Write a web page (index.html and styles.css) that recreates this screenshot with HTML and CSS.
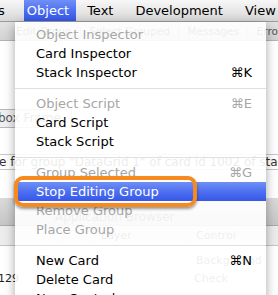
FILE: index.html
```html
<!DOCTYPE html>
<html lang="en">
<head>
  <meta charset="UTF-8" />
  <title>Object menu</title>
  <link rel="stylesheet" href="styles.css">
</head>
<body>

<!-- menu bar -->
<div class="menubar">
  <span class="mb-item mb-cut">s</span>
  <span class="mb-item mb-open">Object</span>
  <span class="mb-item">Text</span>
  <span class="mb-item">Development</span>
  <span class="mb-item">View</span>
</div>

<!-- windows behind the menu -->
<div class="backdrop">
  <div class="toolbar">
    <span>Edit Group</span><span class="bar">|</span><span>Select Grouped</span><span class="bar">|</span><span>Messages</span><span class="bar">|</span><span>Errors</span>
  </div>
  <div class="pane">
    <div class="field">kbox Frame</div>
    <div class="status">e for group "DataGrid 1" of card id 1002 of stack</div>
  </div>
  <div class="browser">
    <div class="browser-title">Application Browser</div>
    <div class="browser-head">
      <span class="col-a"></span><span class="col-b"></span><span class="col-c">Layer</span><span class="col-d">Control</span>
    </div>
    <div class="browser-body">
      <div class="browser-row"><span class="col-a"></span><span class="col-b"><i class="thumb"></i></span><span class="col-c"></span><span class="col-d">Background</span></div>
      <div class="browser-row"><span class="col-a num">129</span><span class="col-b"></span><span class="col-c"></span><span class="col-d">Check</span></div>
    </div>
  </div>
</div>

<!-- open menu -->
<div class="menu">
  <div class="item off">Object Inspector</div>
  <div class="item">Card Inspector</div>
  <div class="item">Stack Inspector <span class="key">⌘K</span></div>
  <div class="sep"></div>
  <div class="item off">Object Script <span class="key">⌘E</span></div>
  <div class="item">Card Script</div>
  <div class="item">Stack Script</div>
  <div class="sep"></div>
  <div class="item off">Group Selected <span class="key">⌘G</span></div>
  <div class="item hot">Stop Editing Group</div>
  <div class="item off">Remove Group</div>
  <div class="item off">Place Group</div>
  <div class="sep"></div>
  <div class="item">New Card <span class="key">⌘N</span></div>
  <div class="item">Delete Card</div>
  <div class="item">New Control <span class="key">▸</span></div>
</div>

<!-- orange highlight around the chosen item -->
<div class="callout"></div>

</body>
</html>
```

FILE: styles.css
```css
body {
  margin: 0;
  width: 278px;
  height: 295px;
  overflow: hidden;
  font-family: "DejaVu Sans", Verdana, sans-serif;
  font-size: 13px;
  background: #fff;
}

/* menu bar */
.menubar {
  display: flex;
  height: 21px;
  line-height: 21px;
  background: linear-gradient(#f7f7f7, #d8d8d8);
  border-bottom: 1px solid #9c9c9c;
  white-space: nowrap;
  color: #000;
}
.mb-item {
  padding: 0 11px;
}
.mb-cut {
  margin-left: -13px;
}
.mb-open {
  margin-left: 8px;
  padding: 0 7px 0 3px;
  color: #fff;
  background: linear-gradient(#7090f6, #4a6cf0 55%, #3557e7);
}

/* background windows */
.backdrop {
  color: #555;
  white-space: nowrap;
  overflow: hidden;
}
.toolbar {
  height: 18px;
  line-height: 18px;
  padding-left: 16px;
  font-size: 10.5px;
  background: linear-gradient(#e2e2e2, #d2d2d2);
  border-bottom: 1px solid #b4b4b4;
}
.toolbar .bar {
  margin: 0 7px;
  color: #999;
}
.pane {
  padding-top: 68px;
  height: 157px;
  box-sizing: border-box;
  background: #fff;
}
.field {
  width: 80px;
  height: 17px;
  line-height: 17px;
  margin-left: -12px;
  padding-left: 2px;
  font-size: 12px;
  background: #efefef;
  border: 1px solid #b8b8b8;
}
.status {
  margin-top: 26px;
  height: 14px;
  line-height: 14px;
  font-size: 12px;
  margin-left: -1px;
  border-top: 1px solid #c8c8c8;
  border-bottom: 1px solid #c8c8c8;
  color: #333;
}
.browser {
  background: #fff;
}
.browser-title {
  height: 28px;
  box-sizing: border-box;
  padding: 10px 0 0 55px;
  line-height: 18px;
  font-size: 12px;
  background: linear-gradient(#dadada, #c6c6c6);
  border-bottom: 1px solid #a8a8a8;
}
.browser-head,
.browser-row {
  display: flex;
  height: 19px;
  line-height: 19px;
  font-size: 11px;
}
.browser-head {
  background: #ececec;
  border-bottom: 1px solid #c4c4c4;
}
.browser-body {
  padding-top: 6px;
}
.browser-row {
  height: 18px;
  line-height: 18px;
}
.col-a { width: 62px; border-right: 1px solid #d0d0d0; }
.col-b { width: 30px; border-right: 1px solid #d0d0d0; }
.col-c { width: 88px; padding-left: 7px; border-right: 1px solid #d0d0d0; }
.col-d { padding-left: 6px; }
.browser-row .col-a,
.browser-row .col-b,
.browser-row .col-c { border-right-color: transparent; }
.num {
  margin-left: -2px;
  color: #222;
}
.thumb {
  display: inline-block;
  width: 10px;
  height: 12px;
  margin: 3px 0 0 -26px;
  border: 1px solid #aaa;
  background: #f2f2f2;
}

/* the menu itself */
.menu {
  position: absolute;
  top: 22px;
  left: 15px;
  width: 251px;
  padding-top: 3px;
  background: rgba(255, 255, 255, 0.9);
  box-shadow: 0 3px 10px rgba(0, 0, 0, 0.35);
  color: #000;
}
.item {
  display: flex;
  justify-content: space-between;
  height: 19px;
  line-height: 19px;
  padding: 0 14px 0 21px;
  white-space: nowrap;
}
.item.off {
  color: #a6a6a6;
}
.item.hot {
  color: #fff;
  background: linear-gradient(#6f8ff6, #4b6df0 55%, #3657e8);
}
.sep {
  height: 1px;
  margin: 6px 0 5px;
  background: #e0e0e0;
}

/* orange annotation box */
.callout {
  position: absolute;
  left: 14px;
  top: 176px;
  width: 183px;
  height: 31px;
  box-sizing: border-box;
  border: 4px solid #f68a1e;
  border-radius: 9px;
  box-shadow: 0 2px 3px rgba(0, 0, 0, 0.4);
}
```
